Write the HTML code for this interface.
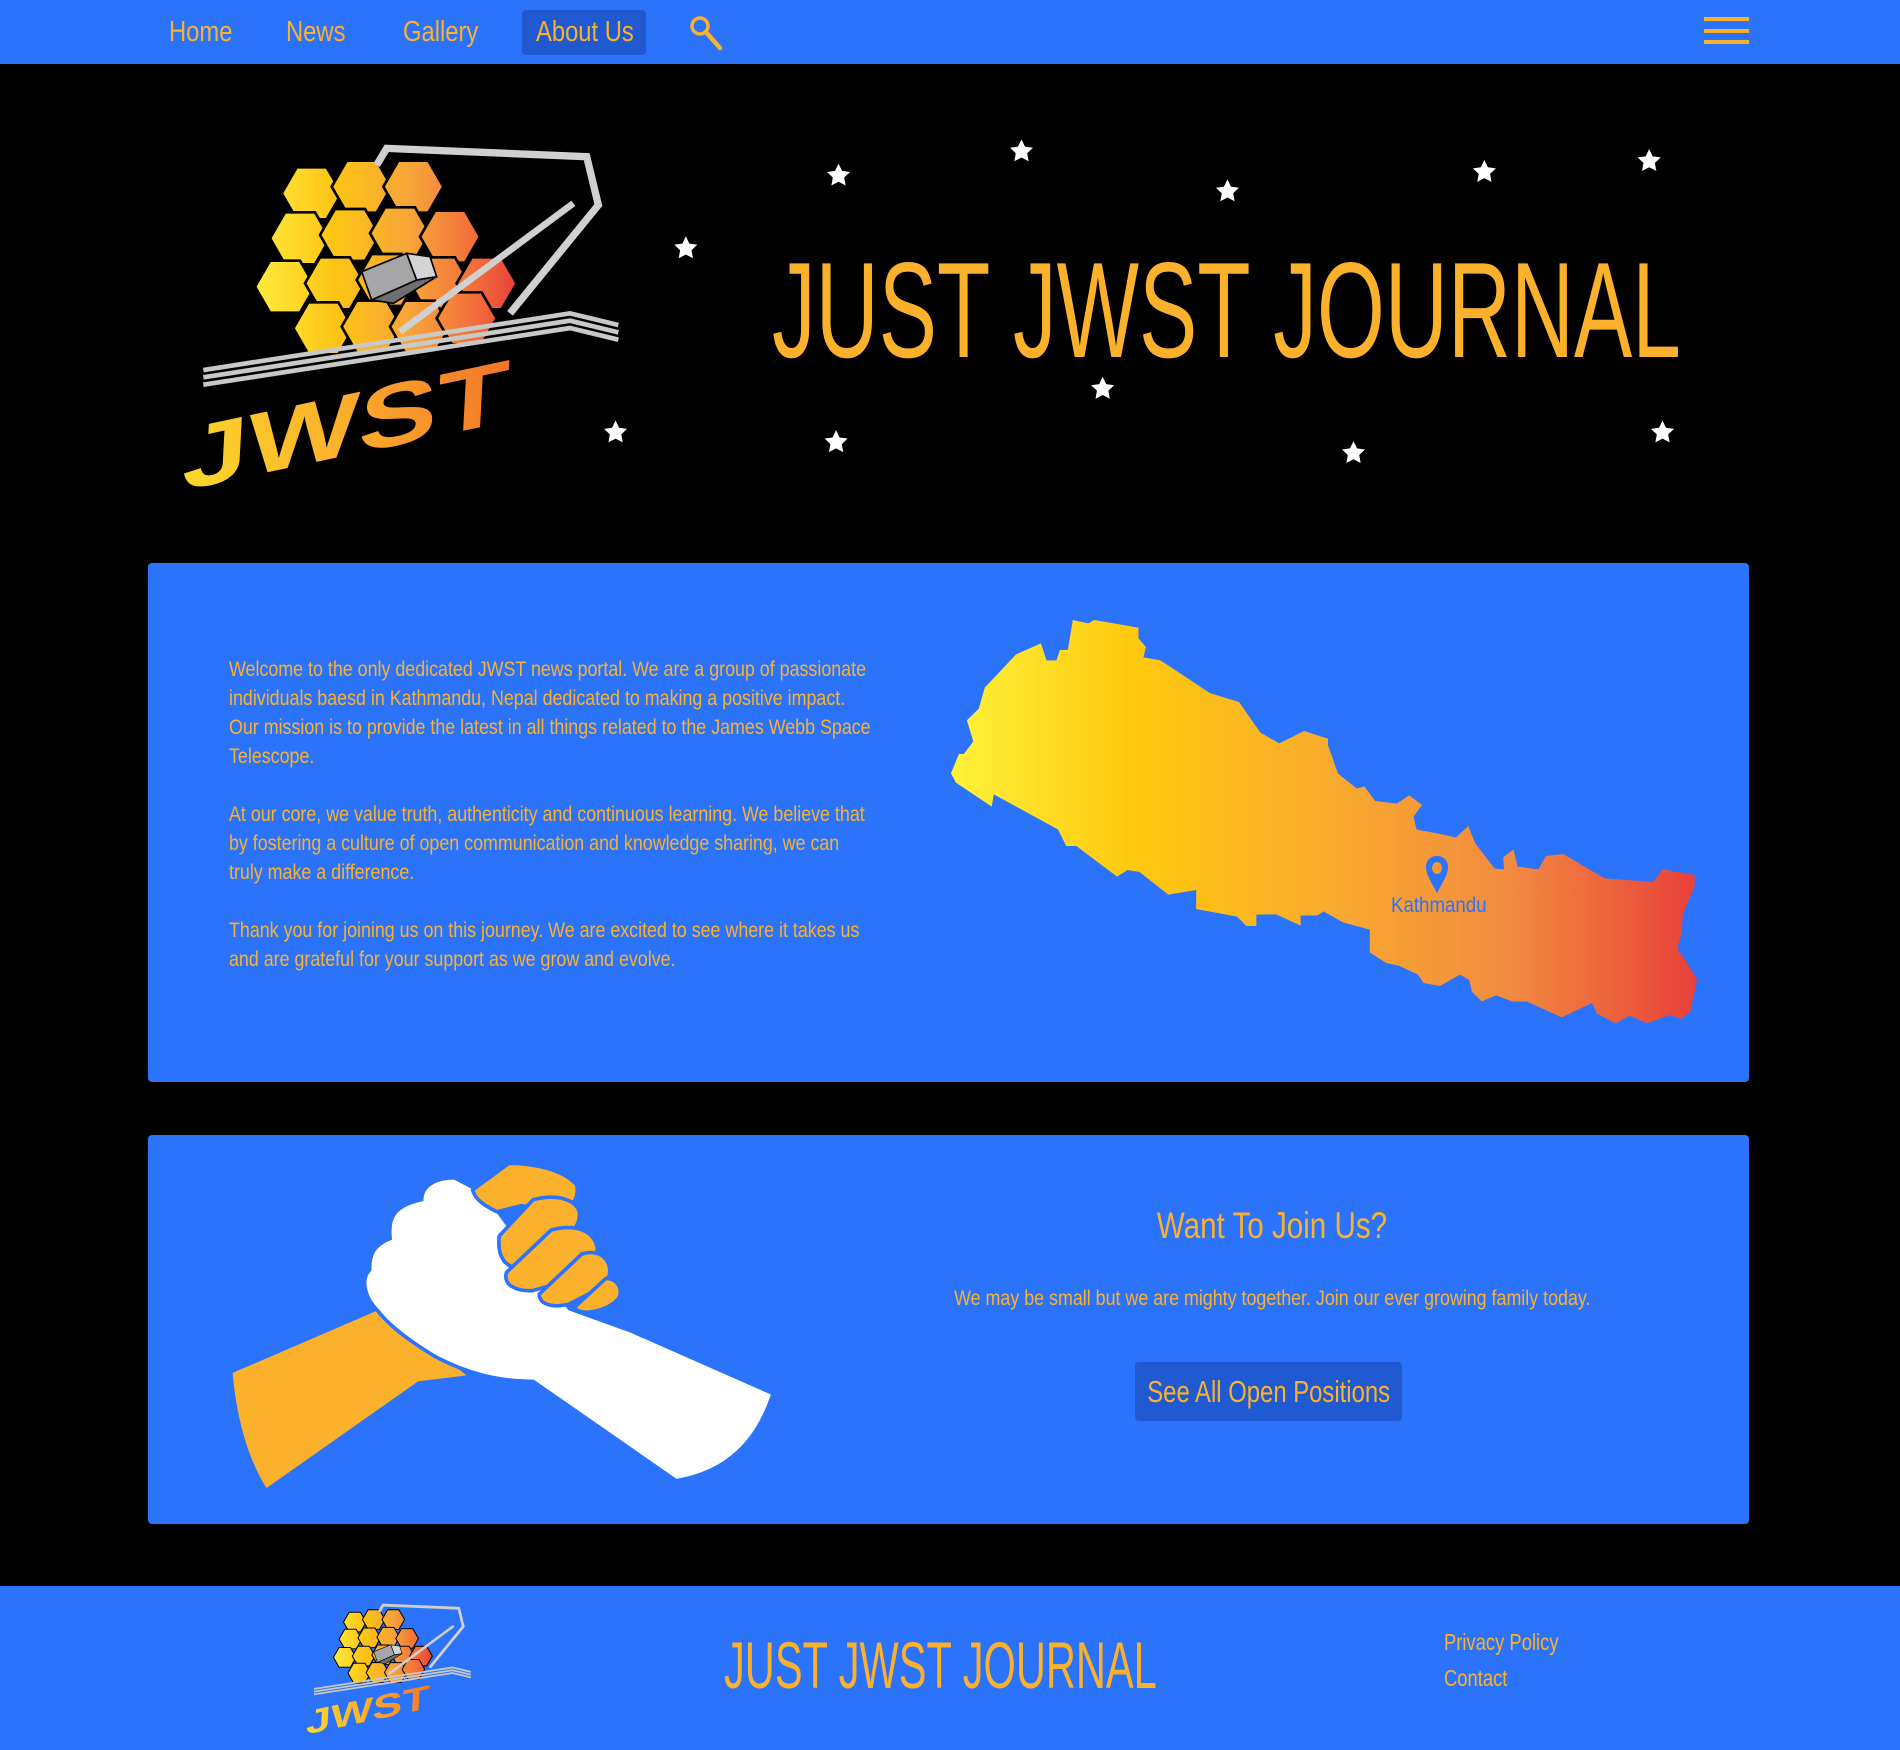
<!DOCTYPE html>
<html><head><meta charset="utf-8">
<style>
*{margin:0;padding:0;box-sizing:border-box}
body{width:1900px;height:1750px;background:#000;position:relative;overflow:hidden;font-family:"Liberation Sans",sans-serif;color:#fbb12b}
.a{position:absolute;white-space:nowrap}
.c{display:inline-block;transform:scaleX(.8);transform-origin:center top}
nav{position:absolute;left:0;top:0;width:1900px;height:64px;background:#2b73fb}
nav span.t{position:absolute;top:14px;font-size:29px;line-height:36px;color:#fbb12b;white-space:nowrap;transform:scaleX(.82);transform-origin:left top}
.card{position:absolute;left:148px;width:1601px;background:#2b73fb;border-radius:4px}
p{font-size:21px;line-height:29px}
</style></head><body>
<nav>
<span class="t" style="left:169px">Home</span>
<span class="t" style="left:286px">News</span>
<span class="t" style="left:403px">Gallery</span>
<div class="a" style="left:522px;top:10px;width:124px;height:45px;background:#1f5ad0;border-radius:4px"></div>
<span class="t" style="left:536px">About Us</span>
<svg class="a" style="left:688px;top:14px" width="36" height="38" viewBox="0 0 36 38"><circle cx="12" cy="12" r="8" fill="none" stroke="#fbb12b" stroke-width="3.5"/><line x1="18" y1="18" x2="32" y2="34" stroke="#fbb12b" stroke-width="4.5" stroke-linecap="round"/></svg>
<div class="a" style="left:1704px;top:17px;width:45px;height:4px;background:#fbb12b"></div>
<div class="a" style="left:1704px;top:29px;width:45px;height:4px;background:#fbb12b"></div>
<div class="a" style="left:1704px;top:40px;width:45px;height:4px;background:#fbb12b"></div>
</nav>

<div class="a" style="left:772px;top:240px;font-size:136px;line-height:140px;color:#fbb12b;transform:scaleX(.642);transform-origin:left top">JUST JWST JOURNAL</div>

<div class="card" style="top:563px;height:519px"></div>
<div class="a" style="left:229px;top:655px;transform:scaleX(.85);transform-origin:left top">
<p>Welcome to the only dedicated JWST news portal. We are a group of passionate<br>individuals baesd in Kathmandu, Nepal dedicated to making a positive impact.<br>Our mission is to provide the latest in all things related to the James Webb Space<br>Telescope.</p>
<p style="margin-top:29px">At our core, we value truth, authenticity and continuous learning. We believe that<br>by fostering a culture of open communication and knowledge sharing, we can<br>truly make a difference.</p>
<p style="margin-top:29px">Thank you for joining us on this journey. We are excited to see where it takes us<br>and are grateful for your support as we grow and evolve.</p>
</div>

<svg class="a" style="left:940px;top:600px" width="780" height="440" viewBox="0 0 1568 1320" preserveAspectRatio="none">
<defs><linearGradient id="np" x1="0" x2="1"><stop offset="0" stop-color="#fff23a"/><stop offset="0.25" stop-color="#fec80d"/><stop offset="0.5" stop-color="#f9ac2e"/><stop offset="0.75" stop-color="#f28a40"/><stop offset="1" stop-color="#e8403a"/></linearGradient></defs>
<polygon fill="url(#np)" points="22,520 38,462 48,462 67,424 54,361 78,326 90,263 153,163 203,130 214,181 234,181 241,150 257,150 267,60 298,70 310,60 399,83 399,115 414,141 409,172 443,181 500,237 542,279 601,306 644,398 682,430 732,393 780,416 780,436 800,521 838,566 853,559 875,603 918,611 943,586 969,615 952,650 958,689 1000,700 1037,713 1062,678 1076,730 1115,806 1134,808 1132,772 1153,748 1161,800 1203,808 1218,768 1253,762 1290,795 1336,835 1434,846 1452,808 1517,825 1517,858 1493,944 1491,1000 1482,1045 1500,1085 1522,1138 1508,1236 1490,1257 1466,1245 1422,1270 1386,1247 1358,1270 1320,1240 1311,1209 1250,1252 1180,1205 1150,1204 1118,1186 1089,1204 1069,1175 1064,1140 1045,1124 1005,1158 972,1149 961,1124 922,1097 897,1089 864,1057 864,989 810,967 771,934 759,946 725,947 725,977 676,943 636,944 636,978 616,978 597,950 515,927 515,870 459,884 401,816 377,810 356,830 274,738 254,738 237,688 108,583 104,620 32,548"/>
</svg>
<svg class="a" style="left:1424px;top:855px" width="26" height="40" viewBox="0 0 26 40"><path d="M13 38 C8 28 2 20 2 12 C2 5 7 1 13 1 C19 1 24 5 24 12 C24 20 18 28 13 38Z M13 7 A5 6 0 1 0 13.01 7Z" fill="#2b73fb" fill-rule="evenodd"/></svg>
<div class="a" style="left:1391px;top:894px;font-size:21px;color:#2b73fb;transform:scaleX(.89);transform-origin:left top">Kathmandu</div>

<div class="card" style="top:1135px;height:389px"></div>
<div class="a" style="left:900px;top:1205px;width:744px;text-align:center;font-size:37px"><span class="c">Want To Join Us?</span></div>
<div class="a" style="left:800px;top:1287px;width:944px;display:flex;justify-content:center;font-size:21px"><span class="c" style="transform:scaleX(.85)">We may be small but we are mighty together. Join our ever growing family today.</span></div>
<div class="a" style="left:1135px;top:1362px;width:267px;height:59px;background:#1f5ad0;border-radius:4px;display:flex;justify-content:center;font-size:31px;line-height:59px"><span class="c" style="transform:scaleX(.77);flex:none">See All Open Positions</span></div>

<div class="a" style="left:0;top:1586px;width:1900px;height:164px;background:#2b73fb"></div>
<div class="a" style="left:724px;top:1630px;font-size:66px;line-height:70px;transform:scaleX(.63);transform-origin:left top">JUST JWST JOURNAL</div>
<div class="a" style="left:1444px;top:1629px;font-size:23px;transform:scaleX(.8);transform-origin:left top">Privacy Policy</div>
<div class="a" style="left:1444px;top:1665px;font-size:23px;transform:scaleX(.8);transform-origin:left top">Contact</div>

<svg class="a" style="left:0;top:0" width="1900" height="1750" viewBox="0 0 1568 1444.2">
<defs>
<linearGradient id="hx" gradientUnits="userSpaceOnUse" x1="180" x2="950" y1="0" y2="0"><stop offset="0" stop-color="#ffe83a"/><stop offset="0.3" stop-color="#fcc415"/><stop offset="0.6" stop-color="#f7a23a"/><stop offset="0.85" stop-color="#f26b3a"/><stop offset="1" stop-color="#e8403a"/></linearGradient>
<linearGradient id="jw" gradientUnits="userSpaceOnUse" x1="0" x2="1200" y1="900" y2="600"><stop offset="0" stop-color="#fde52c"/><stop offset="0.5" stop-color="#fbb12b"/><stop offset="1" stop-color="#f26b2a"/></linearGradient>
<g id="logo">
<g fill="url(#hx)" stroke="#000" stroke-width="8">
<path d="M245,160 l45,-78 h90 l45,78 l-45,78 h-90z"/>
<path d="M395,140 l45,-78 h90 l45,78 l-45,78 h-90z"/>
<path d="M550,140 l45,-78 h90 l45,78 l-45,78 h-90z"/>
<path d="M210,295 l45,-78 h90 l45,78 l-45,78 h-90z"/>
<path d="M360,285 l45,-78 h90 l45,78 l-45,78 h-90z"/>
<path d="M510,280 l45,-78 h90 l45,78 l-45,78 h-90z"/>
<path d="M660,290 l45,-78 h90 l45,78 l-45,78 h-90z"/>
<path d="M165,440 l45,-78 h90 l45,78 l-45,78 h-90z"/>
<path d="M315,430 l45,-78 h90 l45,78 l-45,78 h-90z"/>
<path d="M470,420 l45,-78 h90 l45,78 l-45,78 h-90z"/>
<path d="M630,430 l45,-78 h90 l45,78 l-45,78 h-90z"/>
<path d="M770,430 l45,-78 h90 l45,78 l-45,78 h-90z"/>
<path d="M280,565 l45,-78 h90 l45,78 l-45,78 h-90z"/>
<path d="M425,560 l45,-78 h90 l45,78 l-45,78 h-90z"/>
<path d="M570,560 l45,-78 h90 l45,78 l-45,78 h-90z"/>
<path d="M710,535 l45,-78 h90 l45,78 l-45,78 h-90z"/>
</g>
<polygon points="485,395 620,340 650,420 515,480" fill="#a6a6a8" stroke="#000" stroke-width="5"/>
<polygon points="620,340 690,350 710,410 650,420" fill="#d4d4d6" stroke="#000" stroke-width="5"/>
<polygon points="515,480 650,420 710,410 580,490" fill="#6e6e70" stroke="#000" stroke-width="5"/>
<polyline points="530,75 560,25 1160,50 1195,195 930,520" fill="none" stroke="#d0d0d0" stroke-width="22"/>
<line x1="1120" y1="190" x2="600" y2="575" stroke="#d0d0d0" stroke-width="20"/>
<g fill="none" stroke="#c8c8c8" stroke-width="14">
<polyline points="10,690 1110,520 1255,555"/>
<polyline points="10,712 1110,542 1255,577"/>
<polyline points="10,734 1110,564 1255,599"/>
</g>
<text x="150" y="910" transform="rotate(-12 600 800) skewX(-15)" font-family="Liberation Sans" font-weight="bold" font-size="260" fill="url(#jw)" textLength="1000" lengthAdjust="spacingAndGlyphs">JWST</text>
</g>
<polygon id="st" points="0,-10 2.9,-4 9.5,-3.1 4.7,1.5 5.9,8.1 0,5 -5.9,8.1 -4.7,1.5 -9.5,-3.1 -2.9,-4" fill="#fff"/>
</defs>
<use href="#logo" transform="translate(165.06,115.54) scale(0.2751)"/>
<use href="#logo" transform="translate(258,1322) scale(0.104)"/>
<use href="#st" x="692" y="145"/><use href="#st" x="843" y="125"/><use href="#st" x="1013" y="158"/>
<use href="#st" x="1225" y="142"/><use href="#st" x="1361" y="133"/><use href="#st" x="566" y="205"/>
<use href="#st" x="910" y="321"/><use href="#st" x="508" y="357"/><use href="#st" x="690" y="365"/>
<use href="#st" x="1117" y="374"/><use href="#st" x="1372" y="357"/>
<path d="M192,1133 L315,1080 L385,1135 L345,1140 L220,1228 C205,1205 195,1170 192,1133Z" fill="#fbb12b"/>
<path d="M312,1082 C300,1070 298,1055 305,1048 C305,1035 308,1028 322,1022 C320,1005 325,995 348,990 C348,978 360,972 375,972 L400,985 L470,1080 L520,1098 L638,1150 C625,1190 600,1215 558,1222 L440,1140 C410,1140 385,1133 360,1120 C340,1108 322,1095 312,1082Z" fill="#fff" stroke="#2b73fb" stroke-width="3"/>
<g fill="#fbb12b" stroke="#2b73fb" stroke-width="3">
<path d="M390,982 L420,960 C440,960 465,965 476,978 C478,990 472,998 458,998 L430,995 L410,1000 C400,995 392,990 390,982Z"/>
<path d="M412,1020 L440,990 C460,985 475,990 478,1000 C480,1012 470,1020 455,1030 L430,1045 C418,1048 410,1038 412,1020Z"/>
<path d="M418,1050 L455,1015 C475,1010 490,1015 493,1030 C492,1040 480,1050 465,1058 L440,1065 C425,1066 415,1060 418,1050Z"/>
<path d="M445,1068 L480,1035 C495,1030 505,1040 503,1052 C500,1062 485,1068 470,1076 C455,1080 445,1076 445,1068Z"/>
<path d="M475,1078 L500,1055 C510,1055 515,1065 510,1072 C505,1078 495,1082 485,1083 C478,1083 474,1081 475,1078Z"/>
</g>
</svg>
</body></html>
